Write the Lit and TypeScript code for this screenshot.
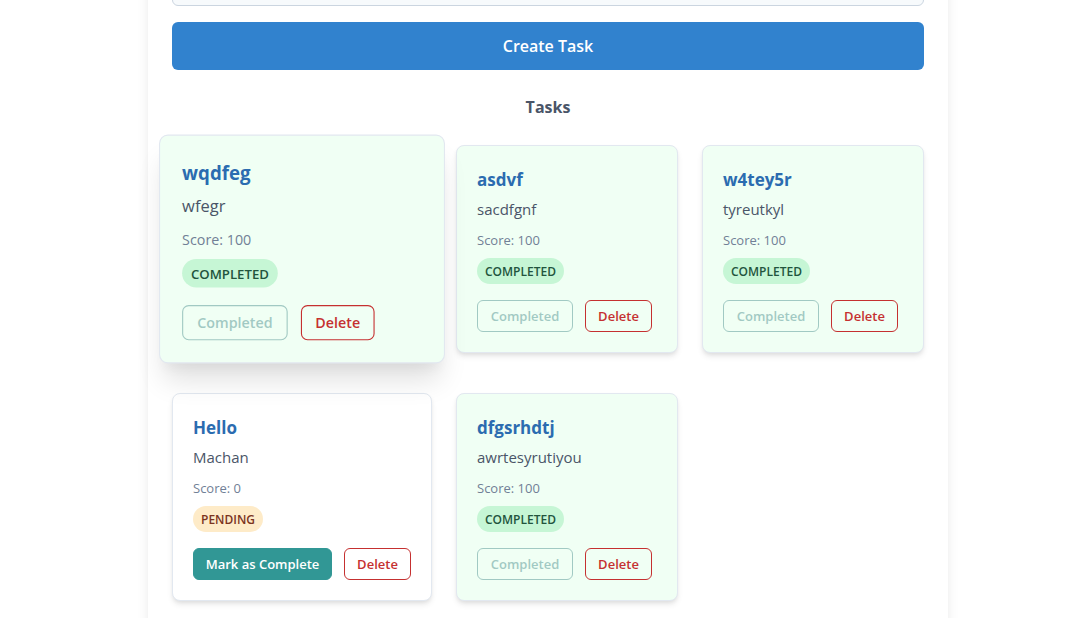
import { LitElement, html, css } from "lit";
import { customElement, property } from "lit/decorators.js";
import { classMap } from "lit/directives/class-map.js";

interface Task {
  title: string;
  description: string;
  score: number;
  completed: boolean;
  active?: boolean;
}

const TASKS: Task[] = [
  { title: "wqdfeg", description: "wfegr", score: 100, completed: true, active: true },
  { title: "asdvf", description: "sacdfgnf", score: 100, completed: true },
  { title: "w4tey5r", description: "tyreutkyl", score: 100, completed: true },
  { title: "Hello", description: "Machan", score: 0, completed: false },
  { title: "dfgsrhdtj", description: "awrtesyrutiyou", score: 100, completed: true },
];

@customElement("task-card")
export class TaskCard extends LitElement {
  @property({ attribute: false }) task!: Task;

  static styles = css`
    :host {
      display: block;
    }
    .card {
      box-sizing: border-box;
      height: 100%;
      padding: 20px;
      border: 1px solid #e2e8f0;
      border-radius: 8px;
      background: #ffffff;
      box-shadow: 0 4px 6px -1px rgba(0, 0, 0, 0.1), 0 2px 4px -1px rgba(0, 0, 0, 0.06);
    }
    .done {
      background: #f0fff4;
    }
    .active {
      position: relative;
      z-index: 1;
      transform: scale(1.1);
      box-shadow: 0 20px 25px -5px rgba(0, 0, 0, 0.12), 0 10px 10px -5px rgba(0, 0, 0, 0.04);
    }
    .title {
      margin: 0 0 4px;
      color: #2b6cb0;
      font-size: 17px;
      font-weight: 700;
      line-height: 27px;
    }
    .description {
      margin: 0 0 8px;
      color: #4a5568;
      font-size: 15px;
      line-height: 24px;
    }
    .score {
      margin: 0 0 7px;
      color: #718096;
      font-size: 13px;
      line-height: 22px;
    }
    .badge {
      display: block;
      width: fit-content;
      padding: 5px 8px 3px;
      border-radius: 13px;
      font-size: 12px;
      font-weight: 600;
      line-height: 18px;
      text-transform: uppercase;
      background: #feebc8;
      color: #7b341e;
    }
    .badge.complete {
      background: #c6f6d5;
      color: #22543d;
    }
    .actions {
      display: flex;
      gap: 12px;
      margin-top: 16px;
    }
    button {
      box-sizing: border-box;
      height: 32px;
      padding: 0 8px;
      border: 1px solid #c53030;
      border-radius: 6px;
      background: transparent;
      color: #c53030;
      font-family: inherit;
      font-size: 13px;
      font-weight: 600;
      line-height: 20px;
      white-space: nowrap;
      cursor: pointer;
    }
    .delete {
      min-width: 67px;
    }
    .mark {
      min-width: 139px;
      border-color: #319795;
      background: #319795;
      color: #ffffff;
    }
    .mark:disabled {
      min-width: 96px;
      border-color: #2c7a7b;
      background: transparent;
      color: #2c7a7b;
      opacity: 0.4;
      cursor: not-allowed;
    }
  `;

  render() {
    const { title, description, score, completed, active } = this.task;
    return html`
      <article class=${classMap({ card: true, done: completed, active: !!active })}>
        <h3 class="title">${title}</h3>
        <p class="description">${description}</p>
        <p class="score">Score: ${score}</p>
        <span class=${classMap({ badge: true, complete: completed })}>${completed ? "Completed" : "Pending"}</span>
        <div class="actions">
          <button class="mark" type="button" ?disabled=${completed}>${completed ? "Completed" : "Mark as Complete"}</button>
          <button class="delete" type="button">Delete</button>
        </div>
      </article>
    `;
  }
}

@customElement("app-root")
export class AppRoot extends LitElement {
  static styles = css`
    :host {
      display: block;
      box-sizing: border-box;
      height: 100vh;
      overflow: hidden;
      padding-left: 21px;
      background: #ffffff;
      font-family: "Segoe UI", "Open Sans", sans-serif;
    }
    .panel {
      box-sizing: border-box;
      max-width: 800px;
      margin: -58px auto 0;
      padding: 24px 24px 40px;
      border-radius: 8px;
      background: #ffffff;
      box-shadow: 0 10px 15px -3px rgba(0, 0, 0, 0.1), 0 4px 6px -2px rgba(0, 0, 0, 0.05);
    }
    .form {
      display: grid;
      gap: 16px;
    }
    .field {
      box-sizing: border-box;
      width: 100%;
      height: 40px;
      padding: 0 16px;
      border: 1px solid #cbd5e0;
      border-radius: 6px;
      background: #f7fafc;
      font: inherit;
    }
    .create {
      height: 48px;
      border: 0;
      border-radius: 6px;
      background: #3182ce;
      color: #ffffff;
      font-family: inherit;
      font-size: 16px;
      font-weight: 600;
      cursor: pointer;
    }
    .heading {
      margin: 24px 0;
      color: #4a5568;
      font-size: 16px;
      font-weight: 700;
      line-height: 27px;
      text-align: center;
    }
    .tasks {
      display: grid;
      grid-template-columns: repeat(3, 1fr);
      gap: 40px 24px;
    }
  `;

  render() {
    return html`
      <main class="panel">
        <form class="form" @submit=${(e: Event) => e.preventDefault()}>
          <input class="field" type="text" aria-label="Task description" />
          <button class="create" type="submit">Create Task</button>
        </form>
        <h2 class="heading">Tasks</h2>
        <section class="tasks">${TASKS.map((task) => html`<task-card .task=${task}></task-card>`)}</section>
      </main>
    `;
  }
}
